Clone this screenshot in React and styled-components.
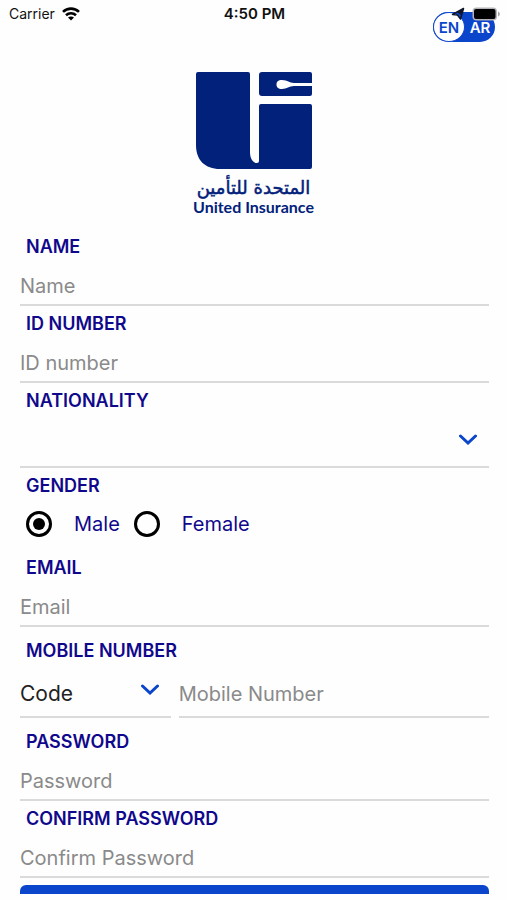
import React, { useState } from "react";
import styled, { createGlobalStyle } from "styled-components";

function Chevron() {
  return (
    <ChevronIcon viewBox="0 0 18 11" aria-hidden="true">
      <path d="M1.5 2 L9 9 L16.5 2" />
    </ChevronIcon>
  );
}

function TextField({ id, label, type, placeholder }) {
  return (
    <Field>
      <Label htmlFor={id}>{label}</Label>
      <Input id={id} type={type} placeholder={placeholder} />
    </Field>
  );
}

function StatusBar() {
  return (
    <Status>
      <Carrier>
        Carrier
        <svg width="18" height="14" viewBox="0 0 18 14">
          <g fill="none" stroke="#000" strokeWidth="2.6">
            <path d="M1 4.9 C5.5 0.5 12.5 0.5 17 4.9" />
            <path d="M4 8.3 C6.8 5.6 11.2 5.6 14 8.3" />
          </g>
          <path d="M9 13.5 L6 10.5 C7.6 9 10.4 9 12 10.5 Z" />
        </svg>
      </Carrier>
      <Time>4:50 PM</Time>
      <Indicators>
        <svg width="14" height="14" viewBox="0 0 14 14">
          <path
            d="M12.5 1.5 L1.5 7.5 L6.5 8 L9.5 12 Z"
            fill="none"
            stroke="#101528"
            strokeWidth="1.5"
            strokeLinejoin="round"
          />
          <path d="M13 1 L6 5 L10 8 Z" fill="#101528" />
        </svg>
        <svg width="28" height="14" viewBox="0 0 28 14">
          <rect x="0.5" y="0.5" width="24.5" height="13" rx="4" fill="#b4b4b8" />
          <rect x="2" y="2" width="21.5" height="10" rx="2" />
          <path d="M26 4.5 C28.4 5.5 28.4 8.5 26 9.5 Z" fill="#a4a4a8" />
        </svg>
      </Indicators>
    </Status>
  );
}

function Logo() {
  return (
    <Brand>
      <svg width="116" height="97" viewBox="0 0 116 97" fill="#02217a">
        <path d="M2 0 H52 Q54 0 54 2 V80 C54 87 57 91 61 91 Q63 91 63 89 V34 Q63 32 65 32 H114 Q116 32 116 34 V95 Q116 97 114 97 H24 C9 97 0 88 0 73 V2 Q0 0 2 0 Z" />
        <path d="M66 0 H114 Q116 0 116 2 V11 H98 C93 11 92 8 86 8 C82 8 80.5 10 80.5 12.5 C80.5 15 82 17 86 17 C91 17 93 14 98 14 H116 V22 Q116 24 114 24 H66 Q63 24 63 21 V3 Q63 0 66 0 Z" />
      </svg>
      <ArabicName lang="ar" dir="rtl">
        المتحدة للتأمين
      </ArabicName>
      <EnglishName>United Insurance</EnglishName>
    </Brand>
  );
}

function App() {
  const [lang, setLang] = useState("EN");
  const [gender, setGender] = useState("male");

  return (
    <>
      <GlobalStyle />
      <Screen>
        <StatusBar />
        <Scroll>
          <TopBar>
            <Toggle>
              {["EN", "AR"].map((item) => (
                <LangButton
                  key={item}
                  type="button"
                  $active={item === lang}
                  aria-pressed={item === lang}
                  onClick={() => setLang(item)}
                >
                  {item}
                </LangButton>
              ))}
            </Toggle>
          </TopBar>
          <Logo />
          <Form onSubmit={(e) => e.preventDefault()}>
            <TextField id="name" label="NAME" type="text" placeholder="Name" />
            <TextField
              id="idNumber"
              label="ID NUMBER"
              type="text"
              placeholder="ID number"
            />
            <Field>
              <Label htmlFor="nationality">NATIONALITY</Label>
              <SelectBox>
                <Select id="nationality" defaultValue="">
                  <option value=""></option>
                </Select>
                <Chevron />
              </SelectBox>
            </Field>
            <Group>
              <Legend>GENDER</Legend>
              <Radios>
                {["Male", "Female"].map((item) => (
                  <RadioLabel key={item}>
                    <Radio
                      type="radio"
                      name="gender"
                      checked={gender === item.toLowerCase()}
                      onChange={() => setGender(item.toLowerCase())}
                    />
                    {item}
                  </RadioLabel>
                ))}
              </Radios>
            </Group>
            <TextField
              id="email"
              label="EMAIL"
              type="email"
              placeholder="Email"
            />
            <Field $spaced>
              <Label htmlFor="mobile">MOBILE NUMBER</Label>
              <PhoneRow>
                <SelectBox>
                  <Select aria-label="Code" defaultValue="code">
                    <option value="code">Code</option>
                  </Select>
                  <Chevron />
                </SelectBox>
                <Input
                  id="mobile"
                  type="tel"
                  placeholder="Mobile Number"
                  $tall
                />
              </PhoneRow>
            </Field>
            <TextField
              id="password"
              label="PASSWORD"
              type="password"
              placeholder="Password"
            />
            <TextField
              id="confirm"
              label="CONFIRM PASSWORD"
              type="password"
              placeholder="Confirm Password"
            />
            <Submit type="submit" aria-label="Submit" />
          </Form>
        </Scroll>
      </Screen>
    </>
  );
}

export default App;

const GlobalStyle = createGlobalStyle`
  * {
    box-sizing: border-box;
  }
  body {
    margin: 0;
    background: #fefefe;
    font-family: Inter, "Liberation Sans", sans-serif;
  }
  input, select, button {
    font-family: inherit;
  }
`;

const Screen = styled.main`
  position: relative;
  display: flex;
  flex-direction: column;
  height: 100vh;
  padding-bottom: 6px;
`;

/* floats over the scrolling content */
const Status = styled.div`
  position: absolute;
  top: 0;
  left: 0;
  right: 0;
  z-index: 1;
  display: grid;
  grid-template-columns: 1fr auto 1fr;
  align-items: center;
  height: 27px;
  padding: 0 7px 0 9px;
  color: #111;
  font-size: 15px;
  pointer-events: none;
`;

const Carrier = styled.span`
  display: flex;
  align-items: center;
  gap: 7px;
  font-size: 14px;
`;

const Time = styled.span`
  font-weight: 600;
`;

const Indicators = styled.span`
  display: flex;
  align-items: center;
  justify-content: flex-end;
  gap: 7px;
`;

const Scroll = styled.div`
  flex: 1;
  min-height: 0;
  overflow-y: auto;
  scrollbar-width: none;
`;

const TopBar = styled.div`
  display: flex;
  justify-content: flex-end;
  padding: 12px 12px 0;
`;

const Toggle = styled.div`
  display: flex;
  width: 62px;
  height: 30px;
  border-radius: 15px;
  background: #0b45cc;
`;

const LangButton = styled.button`
  flex: 1;
  height: 30px;
  padding: 0;
  border: ${(props) => (props.$active ? "1px solid #0b45cc" : "none")};
  border-radius: 50%;
  background: ${(props) => (props.$active ? "#fff" : "transparent")};
  color: ${(props) => (props.$active ? "#0b45cc" : "#fff")};
  font-size: 15px;
  font-weight: 600;
  cursor: pointer;
`;

const Brand = styled.div`
  display: flex;
  flex-direction: column;
  align-items: center;
  padding-top: 30px;
  color: #02217a;
`;

const ArabicName = styled.span`
  margin-top: 9px;
  font-family: "DejaVu Sans", sans-serif;
  font-size: 18px;
  line-height: 20px;
  -webkit-text-stroke: 0.5px #02217a;
`;

const EnglishName = styled.span`
  font-family: Lato, sans-serif;
  font-size: 16px;
  font-weight: 700;
  line-height: 18px;
`;

const Form = styled.form`
  display: flex;
  flex-direction: column;
  gap: 7px;
  padding: 20px 18px 0 20px;
`;

const Field = styled.div`
  display: flex;
  flex-direction: column;
  padding: ${(props) => (props.$spaced ? "6px 0" : "0")};
`;

const Label = styled.label`
  padding-left: 6px;
  color: #10088c;
  font-size: 18px;
  font-weight: 600;
  line-height: 22px;
`;

const Input = styled.input`
  flex: 1;
  width: 100%;
  min-width: 0;
  height: ${(props) => (props.$tall ? "56px" : "auto")};
  min-height: 48px;
  padding: 9px 0 0;
  border: none;
  border-bottom: 2px solid #dadada;
  border-radius: 0;
  outline: none;
  background: transparent;
  color: #222;
  font-size: 20px;
  &::placeholder {
    color: #8a8a8a;
  }
`;

const SelectBox = styled.div`
  position: relative;
  display: flex;
  align-items: center;
  height: 56px;
  border-bottom: 2px solid #dadada;
`;

const Select = styled.select`
  appearance: none;
  width: 100%;
  height: 100%;
  padding: 8px 36px 0 0;
  border: none;
  outline: none;
  background: transparent;
  color: #222;
  font-size: 21px;
`;

const ChevronIcon = styled.svg`
  position: absolute;
  right: 12px;
  width: 18px;
  height: 11px;
  fill: none;
  stroke: #0b45cc;
  stroke-width: 3;
  stroke-linecap: round;
  pointer-events: none;
`;

const Group = styled.fieldset`
  min-width: 0;
  margin: 0;
  padding: 0;
  border: none;
`;

const Legend = styled(Label).attrs({ as: "legend" })``;

const Radios = styled.div`
  display: flex;
  align-items: center;
  gap: 14px;
  height: 53px;
  padding-left: 6px;
`;

const RadioLabel = styled.label`
  display: flex;
  align-items: center;
  gap: 22px;
  color: #10088c;
  font-size: 20px;
`;

const Radio = styled.input`
  appearance: none;
  display: grid;
  place-items: center;
  width: 26px;
  height: 26px;
  margin: 0;
  border: 3px solid #000;
  border-radius: 50%;
  &:checked::before {
    content: "";
    width: 12px;
    height: 12px;
    border-radius: 50%;
    background: #000;
  }
`;

const PhoneRow = styled.div`
  display: grid;
  grid-template-columns: 151fr 311fr;
  gap: 8px;
`;

const Submit = styled.button`
  flex-shrink: 0;
  height: 50px;
  border: none;
  border-radius: 6px;
  background: #0b45cc;
`;
